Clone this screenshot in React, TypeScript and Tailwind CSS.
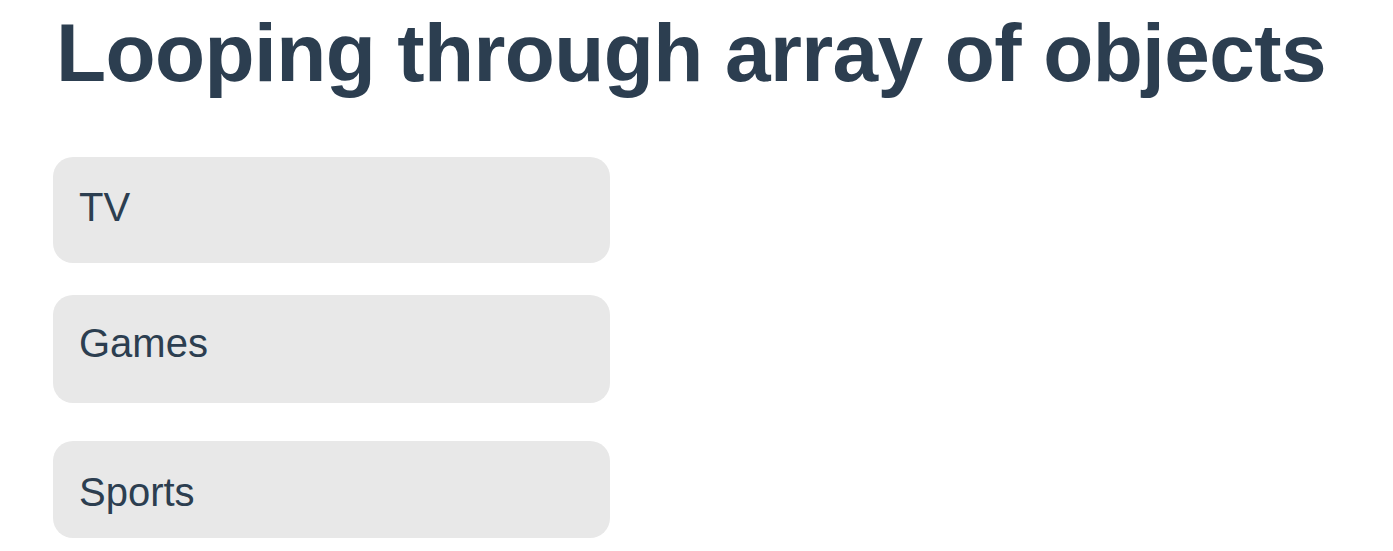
import React from "react";

const items = [
  { name: "TV", cls: "h-[106px] pt-[30px]" },
  { name: "Games", cls: "h-[108px] pt-[28px]" },
  { name: "Sports", cls: "mt-[6px] h-[97px] pt-[31px]" },
];

export default function App() {
  return (
    <div className="min-h-[551px] bg-white pl-[53px] pt-[7px] text-[#2c3e50] [font-family:'Liberation_Sans',Arial,sans-serif]">
      <h1 className="pl-[3px] text-[82px] font-bold leading-[1.117] tracking-[-0.6px]">
        Looping through array of objects
      </h1>
      <ul className="mt-[58px] flex w-[557px] flex-col gap-[32px]">
        {items.map((item) => (
          <li
            key={item.name}
            className={`rounded-[20px] bg-[#e8e8e8] pl-[26px] text-[40px] leading-none ${item.cls}`}
          >
            {item.name}
          </li>
        ))}
      </ul>
    </div>
  );
}
